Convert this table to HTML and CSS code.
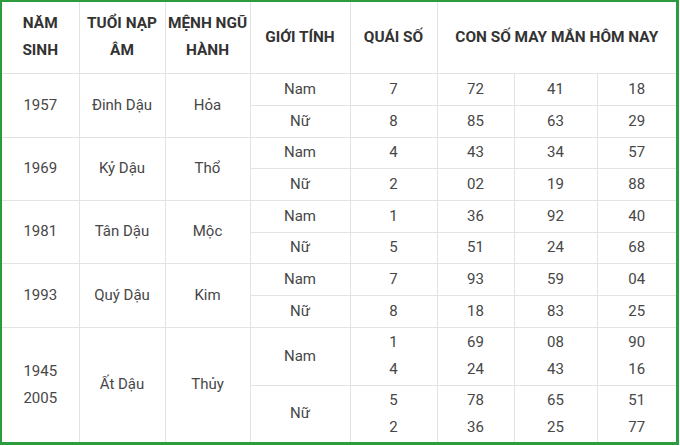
FILE: index.html
```html
<!DOCTYPE html>
<html lang="vi">
<head>
<meta charset="utf-8">
<link rel="stylesheet" href="styles.css">
</head>
<body>
<div class="frame">
<table class="lucky">
  <colgroup>
    <col class="c1"><col class="c2"><col class="c3"><col class="c4"><col class="c5"><col class="c6"><col class="c7"><col class="c8">
  </colgroup>
  <thead>
    <tr class="head">
      <th>NĂM<br>SINH</th>
      <th>TUỔI NẠP<br>ÂM</th>
      <th>MỆNH NGŨ<br>HÀNH</th>
      <th>GIỚI TÍNH</th>
      <th>QUÁI SỐ</th>
      <th colspan="3">CON SỐ MAY MẮN HÔM NAY</th>
    </tr>
  </thead>
  <tbody>
    <tr class="r32"><td rowspan="2">1957</td><td rowspan="2">Đinh Dậu</td><td rowspan="2">Hỏa</td><td>Nam</td><td>7</td><td>72</td><td>41</td><td>18</td></tr>
    <tr class="r32"><td>Nữ</td><td>8</td><td>85</td><td>63</td><td>29</td></tr>
    <tr class="r31"><td rowspan="2">1969</td><td rowspan="2">Kỷ Dậu</td><td rowspan="2">Thổ</td><td>Nam</td><td>4</td><td>43</td><td>34</td><td>57</td></tr>
    <tr class="r32"><td>Nữ</td><td>2</td><td>02</td><td>19</td><td>88</td></tr>
    <tr class="r32"><td rowspan="2">1981</td><td rowspan="2">Tân Dậu</td><td rowspan="2">Mộc</td><td>Nam</td><td>1</td><td>36</td><td>92</td><td>40</td></tr>
    <tr class="r31"><td>Nữ</td><td>5</td><td>51</td><td>24</td><td>68</td></tr>
    <tr class="r32"><td rowspan="2">1993</td><td rowspan="2">Quý Dậu</td><td rowspan="2">Kim</td><td>Nam</td><td>7</td><td>93</td><td>59</td><td>04</td></tr>
    <tr class="r32"><td>Nữ</td><td>8</td><td>18</td><td>83</td><td>25</td></tr>
    <tr class="r58"><td rowspan="2" class="tall">1945<br>2005</td><td rowspan="2">Ất Dậu</td><td rowspan="2">Thủy</td><td>Nam</td><td class="tall">1<br>4</td><td class="tall">69<br>24</td><td class="tall">08<br>43</td><td class="tall">90<br>16</td></tr>
    <tr class="r57"><td>Nữ</td><td class="tall">5<br>2</td><td class="tall">78<br>36</td><td class="tall">65<br>25</td><td class="tall">51<br>77</td></tr>
  </tbody>
</table>
</div>
</body>
</html>
```

FILE: styles.css
```css
html, body {
  margin: 0;
  padding: 0;
  background: #ffffff;
}
.frame {
  box-sizing: border-box;
  width: 679px;
  height: 445px;
  border-style: solid;
  border-color: #2c9c3f;
  border-width: 2px 3px 3px 2px;
  overflow: hidden;
}
.lucky {
  width: 674px;
  height: 440px;
  table-layout: fixed;
  border-collapse: collapse;
  font-family: Roboto, "Liberation Sans", Arial, sans-serif;
  font-size: 15px;
  color: #474747;
}
.c1 { width: 77px; }
.c2 { width: 86px; }
.c3 { width: 85px; }
.c4 { width: 100px; }
.c5 { width: 87px; }
.c6 { width: 77px; }
.c7 { width: 83px; }
.c8 { width: 79px; }
.lucky th, .lucky td {
  border: 1px solid #e3e3e3;
  padding: 0;
  text-align: center;
  vertical-align: middle;
  line-height: 27px;
}
.lucky tr > :first-child { border-left: none; }
.lucky tr > :last-child { border-right: none; }
.lucky thead th { border-top: none; }
.lucky tbody tr:last-child td { border-bottom: none; }
.lucky th {
  font-size: 15.4px;
  font-weight: 700;
  color: #333333;
}
.head { height: 71px; }
.r32 { height: 32px; }
.r31 { height: 31px; }
.r58 { height: 58px; }
.r57 { height: 57px; }
.tall { line-height: 26px; }
```
